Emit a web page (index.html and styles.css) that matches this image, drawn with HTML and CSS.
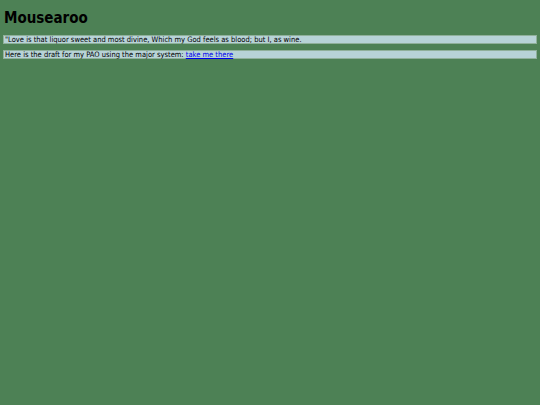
FILE: index.html
```html
<!DOCTYPE html>
<html>
<head>
<meta charset="utf-8">
<link rel="stylesheet" href="styles.css">
</head>
<body>
<h1 class="title">Mousearoo</h1>
<p class="box">"Love is that liquor sweet and most divine, Which my God feels as blood; but I, as wine.</p>
<p class="box">Here is the draft for my PAO using the major system: <a href="#" class="link">take me there</a></p>
</body>
</html>
```
FILE: styles.css
```css
html, body {
  margin: 0;
  padding: 0;
  background: #4d8155;
}
body {
  padding: 3px;
  font-family: "DejaVu Sans Condensed", "DejaVu Sans", sans-serif;
}
.title {
  font-size: 15px;
  line-height: 18px;
  font-weight: bold;
  margin: 6px 1px 8px;
  color: #000;
}
.box {
  background: #b7d3d7;
  border: 1px solid #8fb09a;
  font-size: 7.5px;
  line-height: 7px;
  margin: 0 0 6px;
  padding: 0 1px;
  color: #000;
}
.link {
  color: #0000ee;
}
```
